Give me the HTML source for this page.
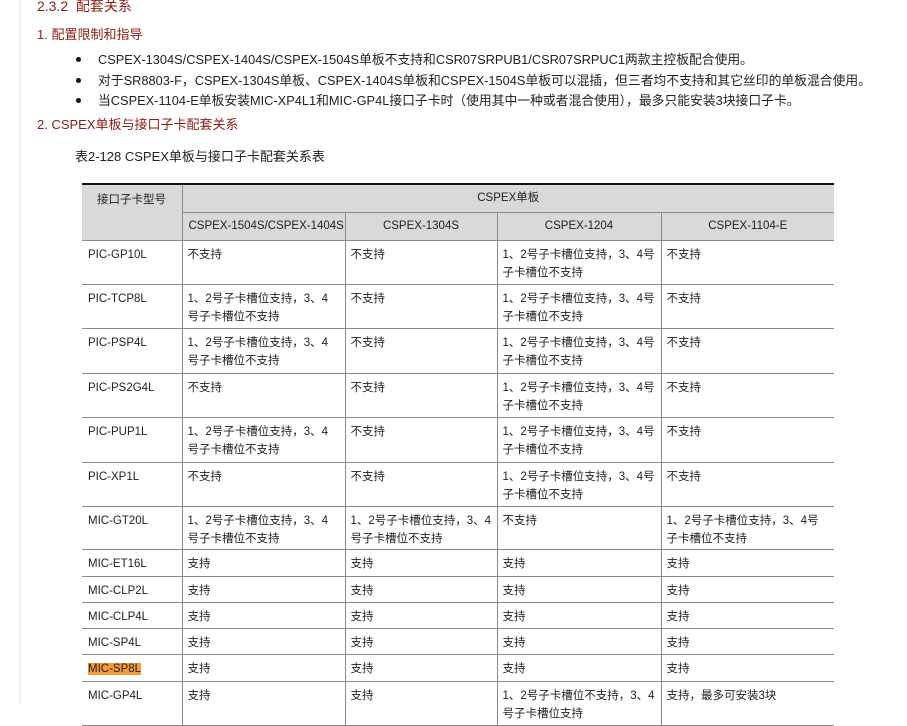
<!DOCTYPE html>
<html><head><meta charset="utf-8"><style>
body{margin:0;width:907px;height:703px;overflow:hidden;background:#fff;font-family:"Liberation Sans","Noto Sans CJK SC",sans-serif;color:#222;position:relative}
.bar{position:absolute;left:19px;top:0;width:2px;height:703px;background:#eee}
.t{position:absolute;white-space:nowrap}
.red{color:#8b1e12}
.li{font-size:12.8px;left:98px}
.dot{position:absolute;left:76px;width:5px;height:5px;border-radius:50%;background:#111}
table{position:absolute;left:82px;top:183px;border-collapse:collapse;font-size:11.5px;table-layout:fixed;width:752px;border-top:2px solid #111}
td,th{border:1px solid #8a8a8a;padding:5px 5px 1px;vertical-align:top;line-height:18px;text-align:left;font-weight:normal}
th{background:#d9d9d9;text-align:center;vertical-align:middle;padding:0 4px;white-space:nowrap}
tr:first-child th{border-top:none}
td:first-child,th:first-child{border-left:none;padding-left:6px}
td:last-child,th:last-child{border-right:none}
.hl{background:#f59a3a}
</style></head><body>
<div class="bar"></div>
<div class="t red" style="left:37px;top:-4px;font-size:14px">2.3.2&nbsp; 配套关系</div>
<div class="t red" style="left:37px;top:24px;font-size:13px">1. 配置限制和指导</div>
<div class="dot" style="top:57px"></div><div class="t li" style="top:49px">CSPEX-1304S/CSPEX-1404S/CSPEX-1504S单板不支持和CSR07SRPUB1/CSR07SRPUC1两款主控板配合使用。</div>
<div class="dot" style="top:78px"></div><div class="t li" style="top:70px">对于SR8803-F，CSPEX-1304S单板、CSPEX-1404S单板和CSPEX-1504S单板可以混插，但三者均不支持和其它丝印的单板混合使用。</div>
<div class="dot" style="top:98px"></div><div class="t li" style="top:90px">当CSPEX-1104-E单板安装MIC-XP4L1和MIC-GP4L接口子卡时（使用其中一种或者混合使用），最多只能安装3块接口子卡。</div>
<div class="t red" style="left:37px;top:114px;font-size:13px">2. CSPEX单板与接口子卡配套关系</div>
<div class="t" style="left:75px;top:146px;font-size:13px">表2-128 CSPEX单板与接口子卡配套关系表</div>
<table>
<colgroup><col style="width:100px"><col style="width:163px"><col style="width:152px"><col style="width:164px"><col style="width:173px"></colgroup>
<tr style="height:28px"><th rowspan="2" style="text-align:left;vertical-align:top;padding:6px 15px">接口子卡型号</th><th colspan="4">CSPEX单板</th></tr>
<tr style="height:28px"><th>CSPEX-1504S/CSPEX-1404S</th><th>CSPEX-1304S</th><th>CSPEX-1204</th><th>CSPEX-1104-E</th></tr>
<tr style="height:44px"><td>PIC-GP10L</td><td>不支持</td><td>不支持</td><td>1、2号子卡槽位支持，3、4号子卡槽位不支持</td><td>不支持</td></tr>
<tr style="height:44px"><td>PIC-TCP8L</td><td>1、2号子卡槽位支持，3、4号子卡槽位不支持</td><td>不支持</td><td>1、2号子卡槽位支持，3、4号子卡槽位不支持</td><td>不支持</td></tr>
<tr style="height:45px"><td>PIC-PSP4L</td><td>1、2号子卡槽位支持，3、4号子卡槽位不支持</td><td>不支持</td><td>1、2号子卡槽位支持，3、4号子卡槽位不支持</td><td>不支持</td></tr>
<tr style="height:44px"><td>PIC-PS2G4L</td><td>不支持</td><td>不支持</td><td>1、2号子卡槽位支持，3、4号子卡槽位不支持</td><td>不支持</td></tr>
<tr style="height:45px"><td>PIC-PUP1L</td><td>1、2号子卡槽位支持，3、4号子卡槽位不支持</td><td>不支持</td><td>1、2号子卡槽位支持，3、4号子卡槽位不支持</td><td>不支持</td></tr>
<tr style="height:44px"><td>PIC-XP1L</td><td>不支持</td><td>不支持</td><td>1、2号子卡槽位支持，3、4号子卡槽位不支持</td><td>不支持</td></tr>
<tr style="height:43px"><td>MIC-GT20L</td><td>1、2号子卡槽位支持，3、4号子卡槽位不支持</td><td>1、2号子卡槽位支持，3、4号子卡槽位不支持</td><td>不支持</td><td>1、2号子卡槽位支持，3、4号子卡槽位不支持</td></tr>
<tr style="height:27px"><td>MIC-ET16L</td><td>支持</td><td>支持</td><td>支持</td><td>支持</td></tr>
<tr style="height:26px"><td>MIC-CLP2L</td><td>支持</td><td>支持</td><td>支持</td><td>支持</td></tr>
<tr style="height:26px"><td>MIC-CLP4L</td><td>支持</td><td>支持</td><td>支持</td><td>支持</td></tr>
<tr style="height:26px"><td>MIC-SP4L</td><td>支持</td><td>支持</td><td>支持</td><td>支持</td></tr>
<tr style="height:27px"><td><span class="hl">MIC-SP8L</span></td><td>支持</td><td>支持</td><td>支持</td><td>支持</td></tr>
<tr style="height:44px"><td>MIC-GP4L</td><td>支持</td><td>支持</td><td>1、2号子卡槽位不支持，3、4号子卡槽位支持</td><td>支持，最多可安装3块</td></tr>
</table>
</body></html>
